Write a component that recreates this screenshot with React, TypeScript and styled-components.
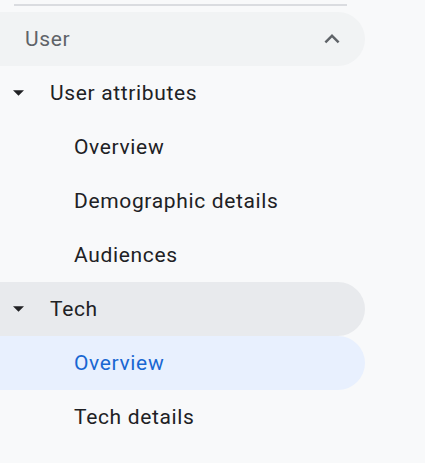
import styled, { createGlobalStyle } from "styled-components";

const GlobalStyle = createGlobalStyle`
  html, body {
    margin: 0;
    padding: 0;
    background: #f8f9fa;
  }
  body {
    font-family: Roboto, "Open Sans", Arial, sans-serif;
  }
`;

const Nav = styled.nav`
  display: flex;
  flex-direction: column;
  width: 365px;
  padding-top: 4px;
`;

const Divider = styled.div`
  height: 1.5px;
  background: #dadce0;
  margin: 0 18px 6.5px 14px;
`;

const Row = styled.div<{ $indent: number; $bg?: string; $color?: string }>`
  display: flex;
  align-items: center;
  height: 54px;
  padding-left: ${(p) => p.$indent}px;
  padding-right: 24px;
  border-radius: 0 27px 27px 0;
  background: ${(p) => p.$bg ?? "transparent"};
  color: ${(p) => p.$color ?? "#202124"};
  font-size: 21px;
  letter-spacing: 0.65px;
  cursor: pointer;
`;

const Label = styled.span`
  flex: 1;
  white-space: nowrap;
`;

const Caret = styled.svg`
  width: 11px;
  height: 6px;
  margin-left: 13px;
  margin-right: 26px;
  fill: #202124;
`;

const Chevron = styled.svg`
  width: 30px;
  height: 30px;
  margin-right: -6px;
  fill: #5f6368;
`;

const DropDown = () => (
  <Caret viewBox="0 0 10 5">
    <path d="M0 0l5 5 5-5z" />
  </Caret>
);

const items = {
  user: ["Overview", "Demographic details", "Audiences"],
  tech: ["Overview", "Tech details"],
};

export default function App() {
  return (
    <>
      <GlobalStyle />
      <Nav>
        <Divider />
        <Row $indent={25} $bg="#f1f3f4" $color="#5f6368">
          <Label>User</Label>
          <Chevron viewBox="0 0 24 24">
            <path d="M12 8l-6 6 1.41 1.41L12 10.83l4.59 4.58L18 14z" />
          </Chevron>
        </Row>
        <Row $indent={0}>
          <DropDown />
          <Label>User attributes</Label>
        </Row>
        {items.user.map((t) => (
          <Row key={t} $indent={74}>
            <Label>{t}</Label>
          </Row>
        ))}
        <Row $indent={0} $bg="#e8eaed">
          <DropDown />
          <Label>Tech</Label>
        </Row>
        {items.tech.map((t, i) => (
          <Row
            key={t}
            $indent={74}
            $bg={i === 0 ? "#e8f0fe" : undefined}
            $color={i === 0 ? "#1967d2" : undefined}
          >
            <Label>{t}</Label>
          </Row>
        ))}
      </Nav>
    </>
  );
}
